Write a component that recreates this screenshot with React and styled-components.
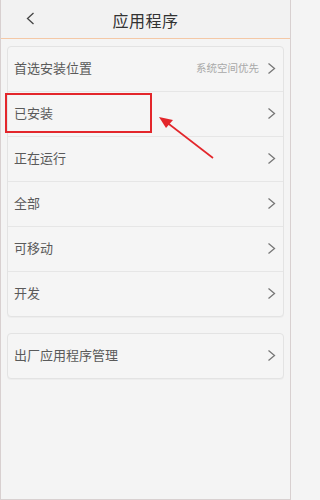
import styled, { createGlobalStyle } from "styled-components";

const GlobalStyle = createGlobalStyle`
  html, body {
    margin: 0;
    padding: 0;
    background: #f4f4f4;
  }
  body {
    font-family: "Noto Sans CJK SC", "Noto Sans", sans-serif;
  }
`;

const groups = [
  [
    { label: "首选安装位置", value: "系统空间优先" },
    { label: "已安装" },
    { label: "正在运行" },
    { label: "全部" },
    { label: "可移动" },
    { label: "开发" },
  ],
  [{ label: "出厂应用程序管理" }],
];

function Chevron({ left }) {
  return (
    <svg width="9" height="13" viewBox="0 0 9 13">
      <path
        d={left ? "M7.5 1 L1.5 6.5 L7.5 12" : "M1.5 1.5 L7.5 6.5 L1.5 11.5"}
        fill="none"
        stroke={left ? "#444" : "#777"}
        strokeWidth="1.3"
      />
    </svg>
  );
}

export default function App() {
  return (
    <>
      <GlobalStyle />
      <Frame>
        <Header>
          <Back>
            <Chevron left />
          </Back>
          <Title>应用程序</Title>
        </Header>
        <Content>
          {groups.map((rows, i) => (
            <Card key={i}>
              {rows.map((row) => (
                <Row key={row.label}>
                  <Label>{row.label}</Label>
                  {row.value && <Value>{row.value}</Value>}
                  <Chevron />
                </Row>
              ))}
            </Card>
          ))}
        </Content>
        <Highlight />
        <Arrow width="70" height="60" viewBox="0 0 70 60">
          <line x1="62" y1="51" x2="14" y2="14" stroke="#e3262b" strokeWidth="1.6" />
          <polygon points="8,10 22,13 15,21" fill="#e3262b" />
        </Arrow>
      </Frame>
    </>
  );
}

const Frame = styled.div`
  position: relative;
  width: 291px;
  height: 500px;
  box-sizing: border-box;
  background: #f4f4f4;
  border-left: 1px solid #d8d0d0;
  border-right: 1px solid #d8d0d0;
  border-bottom: 1px solid #d8d0d0;
  overflow: hidden;
`;

const Header = styled.header`
  position: relative;
  height: 38px;
  display: flex;
  align-items: center;
  justify-content: center;
  background: #f2f2f2;
  border-bottom: 1px solid #f4c8a6;
`;

const Back = styled.div`
  position: absolute;
  left: 25px;
  top: 12px;
  display: flex;
`;

const Title = styled.h1`
  margin: 0 0 -1px;
  font-size: 16px;
  font-weight: 400;
  color: #333;
  letter-spacing: 0.5px;
`;

const Content = styled.main`
  display: flex;
  flex-direction: column;
  gap: 16px;
  padding: 7px 6px 0;
`;

const Card = styled.section`
  background: #f5f5f5;
  border: 1px solid #e3e3e3;
  border-radius: 4px;
  box-shadow: 0 1px 1px rgba(0, 0, 0, 0.03);
`;

const Row = styled.div`
  height: 44px;
  box-sizing: border-box;
  display: flex;
  align-items: center;
  padding: 0 7px 3px 6px;
  & + & {
    height: 45px;
    border-top: 1px solid #e6e6e6;
  }
  svg {
    margin-left: 8px;
    margin-top: 2px;
  }
`;

const Label = styled.span`
  flex: 1;
  font-size: 13px;
  color: #5a5a5a;
`;

const Value = styled.span`
  font-size: 10.5px;
  color: #a8a8a8;
`;

const Highlight = styled.div`
  position: absolute;
  left: 4px;
  top: 93px;
  width: 147px;
  height: 40px;
  border: 2px solid #e3262b;
  box-sizing: border-box;
`;

const Arrow = styled.svg`
  position: absolute;
  left: 150px;
  top: 107px;
`;
